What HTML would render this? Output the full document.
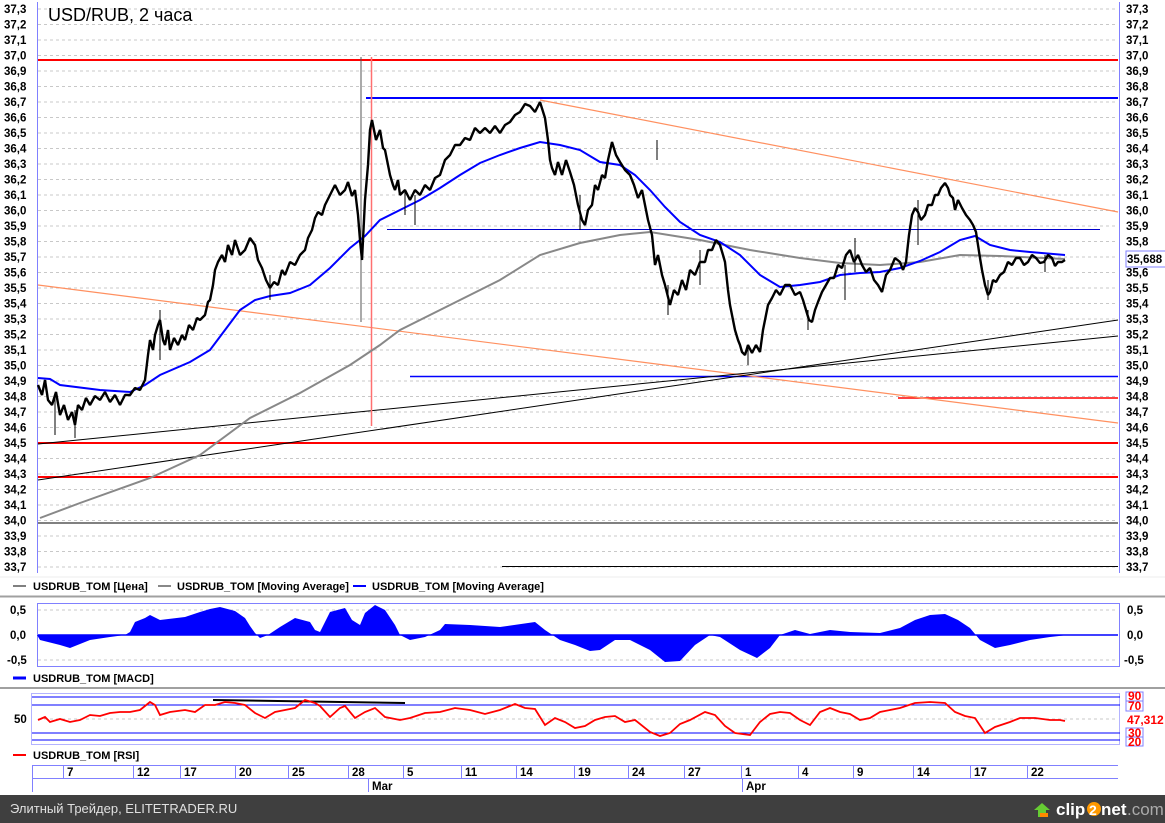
<!DOCTYPE html>
<html><head><meta charset="utf-8"><style>
html,body{margin:0;padding:0;background:#fff;width:1165px;height:823px;overflow:hidden}
svg{display:block}
text{font-family:"Liberation Sans",Arial,sans-serif}
.ax{font-size:11.5px;font-weight:bold;fill:#000}
.lg{font-size:11px;font-weight:bold;fill:#000}
</style></head><body>
<svg width="1165" height="823" viewBox="0 0 1165 823" xmlns="http://www.w3.org/2000/svg">
<rect width="1165" height="823" fill="#fff"/>
<g stroke="#c8c8c8" stroke-dasharray="3,3" stroke-width="1">
<line x1="38" x2="1118" y1="9" y2="9"/><line x1="38" x2="1118" y1="24.5" y2="24.5"/><line x1="38" x2="1118" y1="40" y2="40"/><line x1="38" x2="1118" y1="55.5" y2="55.5"/><line x1="38" x2="1118" y1="71" y2="71"/><line x1="38" x2="1118" y1="86.5" y2="86.5"/><line x1="38" x2="1118" y1="102" y2="102"/><line x1="38" x2="1118" y1="117.5" y2="117.5"/><line x1="38" x2="1118" y1="133" y2="133"/><line x1="38" x2="1118" y1="148.5" y2="148.5"/><line x1="38" x2="1118" y1="164" y2="164"/><line x1="38" x2="1118" y1="179.5" y2="179.5"/><line x1="38" x2="1118" y1="195" y2="195"/><line x1="38" x2="1118" y1="210.5" y2="210.5"/><line x1="38" x2="1118" y1="226" y2="226"/><line x1="38" x2="1118" y1="241.5" y2="241.5"/><line x1="38" x2="1118" y1="257" y2="257"/><line x1="38" x2="1118" y1="272.5" y2="272.5"/><line x1="38" x2="1118" y1="288" y2="288"/><line x1="38" x2="1118" y1="303.5" y2="303.5"/><line x1="38" x2="1118" y1="319" y2="319"/><line x1="38" x2="1118" y1="334.5" y2="334.5"/><line x1="38" x2="1118" y1="350" y2="350"/><line x1="38" x2="1118" y1="365.5" y2="365.5"/><line x1="38" x2="1118" y1="381" y2="381"/><line x1="38" x2="1118" y1="396.5" y2="396.5"/><line x1="38" x2="1118" y1="412" y2="412"/><line x1="38" x2="1118" y1="427.5" y2="427.5"/><line x1="38" x2="1118" y1="443" y2="443"/><line x1="38" x2="1118" y1="458.5" y2="458.5"/><line x1="38" x2="1118" y1="474" y2="474"/><line x1="38" x2="1118" y1="489.5" y2="489.5"/><line x1="38" x2="1118" y1="505" y2="505"/><line x1="38" x2="1118" y1="520.5" y2="520.5"/><line x1="38" x2="1118" y1="536" y2="536"/><line x1="38" x2="1118" y1="551.5" y2="551.5"/><line x1="38" x2="1118" y1="567" y2="567"/>
</g>
<line x1="37.5" y1="2" x2="37.5" y2="573" stroke="#8080ff"/>
<line x1="1119.5" y1="2" x2="1119.5" y2="573" stroke="#8080ff"/>
<g class="ax">
<text x="4" y="13">37,3</text><text x="4" y="28.5">37,2</text><text x="4" y="44">37,1</text><text x="4" y="59.5">37,0</text><text x="4" y="75">36,9</text><text x="4" y="90.5">36,8</text><text x="4" y="106">36,7</text><text x="4" y="121.5">36,6</text><text x="4" y="137">36,5</text><text x="4" y="152.5">36,4</text><text x="4" y="168">36,3</text><text x="4" y="183.5">36,2</text><text x="4" y="199">36,1</text><text x="4" y="214.5">36,0</text><text x="4" y="230">35,9</text><text x="4" y="245.5">35,8</text><text x="4" y="261">35,7</text><text x="4" y="276.5">35,6</text><text x="4" y="292">35,5</text><text x="4" y="307.5">35,4</text><text x="4" y="323">35,3</text><text x="4" y="338.5">35,2</text><text x="4" y="354">35,1</text><text x="4" y="369.5">35,0</text><text x="4" y="385">34,9</text><text x="4" y="400.5">34,8</text><text x="4" y="416">34,7</text><text x="4" y="431.5">34,6</text><text x="4" y="447">34,5</text><text x="4" y="462.5">34,4</text><text x="4" y="478">34,3</text><text x="4" y="493.5">34,2</text><text x="4" y="509">34,1</text><text x="4" y="524.5">34,0</text><text x="4" y="540">33,9</text><text x="4" y="555.5">33,8</text><text x="4" y="571">33,7</text>
</g>
<g class="ax">
<text x="1126" y="13">37,3</text><text x="1126" y="28.5">37,2</text><text x="1126" y="44">37,1</text><text x="1126" y="59.5">37,0</text><text x="1126" y="75">36,9</text><text x="1126" y="90.5">36,8</text><text x="1126" y="106">36,7</text><text x="1126" y="121.5">36,6</text><text x="1126" y="137">36,5</text><text x="1126" y="152.5">36,4</text><text x="1126" y="168">36,3</text><text x="1126" y="183.5">36,2</text><text x="1126" y="199">36,1</text><text x="1126" y="214.5">36,0</text><text x="1126" y="230">35,9</text><text x="1126" y="245.5">35,8</text><text x="1126" y="276.5">35,6</text><text x="1126" y="292">35,5</text><text x="1126" y="307.5">35,4</text><text x="1126" y="323">35,3</text><text x="1126" y="338.5">35,2</text><text x="1126" y="354">35,1</text><text x="1126" y="369.5">35,0</text><text x="1126" y="385">34,9</text><text x="1126" y="400.5">34,8</text><text x="1126" y="416">34,7</text><text x="1126" y="431.5">34,6</text><text x="1126" y="447">34,5</text><text x="1126" y="462.5">34,4</text><text x="1126" y="478">34,3</text><text x="1126" y="493.5">34,2</text><text x="1126" y="509">34,1</text><text x="1126" y="524.5">34,0</text><text x="1126" y="540">33,9</text><text x="1126" y="555.5">33,8</text><text x="1126" y="571">33,7</text>
</g>
<rect x="1126" y="251" width="42" height="16" fill="#fff" stroke="#8080ff"/>
<text class="ax" x="1127" y="263">35,688</text>
<text x="48" y="21" font-size="18" fill="#000">USD/RUB, 2 часа</text>

<line x1="38" x2="1118" y1="60" y2="60" stroke="#f00" stroke-width="2"/>
<line x1="366" x2="1118" y1="98" y2="98" stroke="#0000ff" stroke-width="2"/>
<line x1="387" x2="1100" y1="229.5" y2="229.5" stroke="#0000cc" stroke-width="1"/>
<line x1="410" x2="1118" y1="376.5" y2="376.5" stroke="#0000ff" stroke-width="1.5"/>
<line x1="898" x2="1118" y1="398" y2="398" stroke="#f00" stroke-width="1.5"/>
<line x1="38" x2="1118" y1="443" y2="443" stroke="#f00" stroke-width="2"/>
<line x1="38" x2="1118" y1="477" y2="477" stroke="#f00" stroke-width="2"/>
<line x1="38" x2="1118" y1="523" y2="523" stroke="#000" stroke-width="1"/>
<line x1="502" x2="1118" y1="566.5" y2="566.5" stroke="#000" stroke-width="1"/>
<line x1="540" y1="100" x2="1118" y2="212" stroke="#ff9060" stroke-width="1.2"/>
<line x1="38" y1="285" x2="1118" y2="423" stroke="#ff9060" stroke-width="1.2"/>
<line x1="38" y1="444" x2="1118" y2="336" stroke="#000" stroke-width="1"/>
<line x1="38" y1="480" x2="1118" y2="320" stroke="#000" stroke-width="1"/>
<line x1="361" y1="57" x2="361" y2="322" stroke="#555" stroke-width="1"/>
<line x1="371.5" y1="57" x2="371.5" y2="426" stroke="#ff7070" stroke-width="1.5"/>

<polyline fill="none" stroke="#888" stroke-width="2" points="40,518 80,503 150,478 200,455 250,418 300,393 350,365 380,345 400,330 450,305 500,280 540,255 580,243 620,235 650,232 700,240 750,250 800,258 840,263 880,265 920,262 960,255 1000,256 1065,259"/>
<polyline fill="none" stroke="#0000ff" stroke-width="2" points="38,378 50,379 60,385 100,390 130,392 145,385 160,375 190,362 210,350 225,330 240,310 255,300 270,296 290,293 310,285 330,268 350,248 365,236 380,220 400,210 420,200 440,188 460,175 480,163 500,155 520,148 540,142 560,145 580,150 600,162 620,165 635,175 650,190 665,207 680,222 700,235 720,242 740,255 760,275 780,287 800,285 820,282 840,275 860,273 880,272 900,268 920,261 940,252 960,240 975,236 990,245 1010,250 1030,252 1065,255"/>
<polyline fill="none" stroke="#000" stroke-width="2.4" stroke-linejoin="bevel" points="38,385 42,395 45,380 48,400 52,405 56,392 60,415 64,405 68,420 72,412 75,425 78,405 82,410 86,398 90,405 95,396 100,400 105,392 110,402 115,395 120,405 125,395 130,395 135,388 140,390 145,380 148,355 150,340 153,350 155,335 158,325 160,320 163,340 165,345 168,330 170,350 174,338 178,345 182,335 185,340 189,325 193,330 197,318 200,320 205,315 208,302 210,300 213,285 215,270 218,262 222,255 225,262 228,245 232,255 235,240 240,255 245,250 250,238 255,245 258,260 262,268 266,280 270,288 274,282 278,285 282,270 285,275 290,262 295,265 300,255 305,250 308,238 312,230 315,218 318,212 322,215 325,205 330,195 335,185 340,195 345,190 348,182 352,196 355,190 358,215 360,240 362,260 365,200 368,165 370,130 372,120 376,140 380,130 383,148 385,150 388,165 390,175 393,185 395,190 398,180 400,195 405,190 410,200 415,190 420,195 425,185 430,190 435,178 440,175 445,160 450,155 455,145 460,145 465,138 470,140 475,128 480,133 485,128 490,133 495,126 500,133 505,125 510,122 515,115 520,112 525,104 530,106 535,112 540,102 545,118 548,140 550,160 552,168 555,175 558,162 562,175 566,160 570,172 574,185 578,205 582,220 585,225 588,210 592,205 595,185 598,190 602,175 605,178 608,160 612,142 616,155 620,162 625,170 630,175 634,185 638,198 642,190 648,220 652,235 655,265 658,255 662,275 665,285 670,305 674,290 678,295 682,280 686,290 690,270 695,275 700,262 705,262 708,250 712,250 716,240 720,245 723,255 725,262 728,290 730,305 733,320 735,330 738,340 740,345 742,352 745,355 748,345 752,353 756,345 760,352 763,330 765,320 768,305 772,298 776,290 780,295 785,285 790,285 795,295 800,292 803,300 806,310 809,320 812,322 815,310 818,302 822,292 826,285 830,278 834,278 838,265 842,268 846,255 850,250 854,262 858,255 862,265 866,272 870,268 874,280 878,285 882,292 886,275 890,270 895,258 900,262 903,270 906,262 909,235 912,215 915,208 918,212 921,220 925,215 928,205 932,205 935,195 938,195 941,188 945,183 948,188 950,195 953,198 955,210 958,200 962,208 966,215 970,220 973,225 976,232 978,245 980,258 982,270 985,285 988,295 990,292 993,280 996,282 1000,275 1004,272 1008,262 1012,265 1016,258 1020,258 1024,265 1028,262 1032,255 1036,258 1040,263 1044,262 1048,255 1052,258 1055,266 1058,262 1062,262 1065,260"/>
<g stroke="#000" stroke-width="1">
<line x1="55" y1="395" x2="55" y2="435"/><line x1="75" y1="410" x2="75" y2="438"/><line x1="160" y1="310" x2="160" y2="360"/><line x1="270" y1="275" x2="270" y2="300"/><line x1="405" y1="190" x2="405" y2="215"/><line x1="415" y1="195" x2="415" y2="225"/><line x1="668" y1="285" x2="668" y2="315"/><line x1="748" y1="345" x2="748" y2="365"/><line x1="808" y1="310" x2="808" y2="330"/><line x1="845" y1="265" x2="845" y2="300"/><line x1="855" y1="238" x2="855" y2="272"/><line x1="918" y1="200" x2="918" y2="245"/><line x1="988" y1="280" x2="988" y2="300"/><line x1="1045" y1="255" x2="1045" y2="272"/><line x1="580" y1="195" x2="580" y2="230"/><line x1="657" y1="140" x2="657" y2="160"/><line x1="700" y1="250" x2="700" y2="285"/>
</g>

<line x1="0" y1="577" x2="1165" y2="577" stroke="#eee"/>
<line x1="13" y1="586" x2="26" y2="586" stroke="#000" stroke-width="1"/>
<text class="lg" x="33" y="590">USDRUB_TOM [Цена]</text>
<line x1="158" y1="586" x2="171" y2="586" stroke="#888" stroke-width="2"/>
<text class="lg" x="177" y="590">USDRUB_TOM [Moving Average]</text>
<line x1="353" y1="586" x2="366" y2="586" stroke="#0000ff" stroke-width="2"/>
<text class="lg" x="372" y="590">USDRUB_TOM [Moving Average]</text>
<line x1="0" y1="596.5" x2="1165" y2="596.5" stroke="#a0a0a0" stroke-width="2"/>

<rect x="37.5" y="603.5" width="1082" height="63" fill="none" stroke="#8080ff"/>
<g stroke="#c8c8c8" stroke-dasharray="3,3"><line x1="38" x2="1118" y1="610" y2="610"/><line x1="38" x2="1118" y1="660" y2="660"/></g>
<polygon fill="#0000ff" points="37,635 40,640 60,645 70,648 90,640 110,637 125,635 130,632 135,622 145,618 150,615 160,620 185,617 200,612 210,609 220,607 235,611 245,618 250,626 255,633 260,638 268,635 280,627 295,618 310,622 315,630 320,632 330,612 345,608 352,620 360,625 365,613 375,605 385,610 395,625 400,635 410,640 425,637 440,630 445,624 470,625 500,627 535,622 545,630 560,640 575,645 590,651 600,650 615,640 630,640 650,650 665,662 680,661 695,645 710,635 720,637 740,650 757,658 770,648 780,635 795,630 810,634 830,630 850,632 880,633 900,628 915,620 930,615 945,614 958,620 970,628 980,640 995,648 1010,645 1030,640 1050,637 1068,635"/>
<line x1="38" x2="1118" y1="635" y2="635" stroke="#0000ff" stroke-width="1.5"/>
<text class="ax" x="10" y="614">0,5</text><text class="ax" x="10" y="639">0,0</text><text class="ax" x="7" y="664">-0,5</text>
<text class="ax" x="1127" y="614">0,5</text><text class="ax" x="1127" y="639">0,0</text><text class="ax" x="1124" y="664">-0,5</text>
<line x1="13" y1="678" x2="26" y2="678" stroke="#0000ff" stroke-width="3"/>
<text class="lg" x="33" y="682">USDRUB_TOM [MACD]</text>
<line x1="0" y1="688" x2="1165" y2="688" stroke="#a0a0a0" stroke-width="2"/>

<rect x="31.5" y="693.5" width="1088" height="51" fill="none" stroke="#8080ff" stroke-opacity="0.6"/>
<g stroke="#0000ff" stroke-width="1"><line x1="32" x2="1120" y1="697" y2="697"/><line x1="32" x2="1120" y1="705" y2="705"/><line x1="32" x2="1120" y1="733" y2="733"/><line x1="32" x2="1120" y1="740" y2="740"/></g>
<line x1="38" x2="1118" y1="719" y2="719" stroke="#c8c8c8" stroke-dasharray="3,3"/>
<line x1="213" y1="700" x2="405" y2="703" stroke="#000" stroke-width="2"/>
<polyline fill="none" stroke="#f00" stroke-width="1.8" points="38,720 45,717 50,722 60,719 70,722 80,720 90,715 100,716 110,713 120,712 130,712 140,710 150,702 155,705 160,715 170,712 185,710 195,712 205,705 215,705 225,702 235,703 245,705 255,713 265,718 275,712 285,710 295,708 305,700 315,703 320,706 330,717 340,708 345,706 355,718 365,712 375,708 385,717 400,720 410,718 425,713 440,712 455,708 470,710 485,714 500,710 515,704 525,708 535,709 545,725 555,718 565,722 575,728 585,726 595,720 605,717 615,716 625,722 635,720 650,732 660,736 670,733 680,724 690,720 705,712 715,715 725,726 735,733 750,735 760,722 770,714 780,712 790,713 800,720 810,725 820,712 830,708 840,712 850,714 860,720 870,718 880,712 900,708 915,703 930,702 945,703 955,712 965,716 975,718 985,733 995,727 1010,722 1020,718 1035,718 1050,720 1060,720 1065,721"/>
<text class="ax" x="14" y="723">50</text>
<g fill="#fff" stroke="#8080ff"><rect x="1126" y="692" width="17" height="9"/><rect x="1126" y="701" width="17" height="10"/><rect x="1126" y="728" width="17" height="9"/><rect x="1126" y="737" width="17" height="9"/></g>
<g font-size="12" font-weight="bold" fill="#f00"><text x="1128" y="700">90</text><text x="1128" y="710">70</text><text x="1127" y="724">47,312</text><text x="1128" y="737">30</text><text x="1128" y="746">20</text></g>
<line x1="13" y1="755" x2="26" y2="755" stroke="#f00" stroke-width="2"/>
<text class="lg" x="33" y="759">USDRUB_TOM [RSI]</text>

<g stroke="#8080ff" stroke-width="1">
<line x1="32" y1="765.5" x2="1118" y2="765.5"/><line x1="32" y1="778.5" x2="1118" y2="778.5"/><line x1="32.5" y1="765" x2="32.5" y2="792"/>
<line x1="63.5" y1="765" x2="63.5" y2="778"/><line x1="133.5" y1="765" x2="133.5" y2="778"/><line x1="180.5" y1="765" x2="180.5" y2="778"/><line x1="235.5" y1="765" x2="235.5" y2="778"/><line x1="288.5" y1="765" x2="288.5" y2="778"/><line x1="348.5" y1="765" x2="348.5" y2="778"/><line x1="403.5" y1="765" x2="403.5" y2="778"/><line x1="461.5" y1="765" x2="461.5" y2="778"/><line x1="516.5" y1="765" x2="516.5" y2="778"/><line x1="574.5" y1="765" x2="574.5" y2="778"/><line x1="628.5" y1="765" x2="628.5" y2="778"/><line x1="684.5" y1="765" x2="684.5" y2="778"/><line x1="741.5" y1="765" x2="741.5" y2="778"/><line x1="798.5" y1="765" x2="798.5" y2="778"/><line x1="853.5" y1="765" x2="853.5" y2="778"/><line x1="913.5" y1="765" x2="913.5" y2="778"/><line x1="970.5" y1="765" x2="970.5" y2="778"/><line x1="1027.5" y1="765" x2="1027.5" y2="778"/>
<line x1="368.5" y1="778" x2="368.5" y2="792"/><line x1="742.5" y1="778" x2="742.5" y2="792"/>
</g>
<g class="ax">
<text x="67" y="776">7</text><text x="137" y="776">12</text><text x="184" y="776">17</text><text x="239" y="776">20</text><text x="292" y="776">25</text><text x="352" y="776">28</text><text x="407" y="776">5</text><text x="465" y="776">11</text><text x="520" y="776">14</text><text x="578" y="776">19</text><text x="632" y="776">24</text><text x="688" y="776">27</text><text x="745" y="776">1</text><text x="802" y="776">4</text><text x="857" y="776">9</text><text x="917" y="776">14</text><text x="974" y="776">17</text><text x="1031" y="776">22</text>
<text x="372" y="790">Mar</text><text x="746" y="790">Apr</text>
</g>

<rect x="0" y="795" width="1165" height="28" fill="#3f3f3f"/>
<text x="10" y="813" font-size="13" fill="#e0e0e0">Элитный Трейдер, ELITETRADER.RU</text>
<path d="M1042 803 L1050 810 L1046 810 L1046 817 L1038 817 L1038 810 L1034 810 Z" fill="#6c3"/>
<rect x="1040" y="813" width="8" height="4" fill="#f80"/>
<text x="1056" y="815" font-size="17" font-weight="bold" fill="#fff">clip</text>
<circle cx="1094" cy="809" r="7" fill="#f90"/>
<text x="1089" y="815" font-size="14" font-weight="bold" fill="#fff">2</text>
<text x="1101" y="815" font-size="17" font-weight="bold" fill="#fff">net</text>
<text x="1127" y="815" font-size="17" fill="#aaa">.com</text>
</svg>
</body></html>
